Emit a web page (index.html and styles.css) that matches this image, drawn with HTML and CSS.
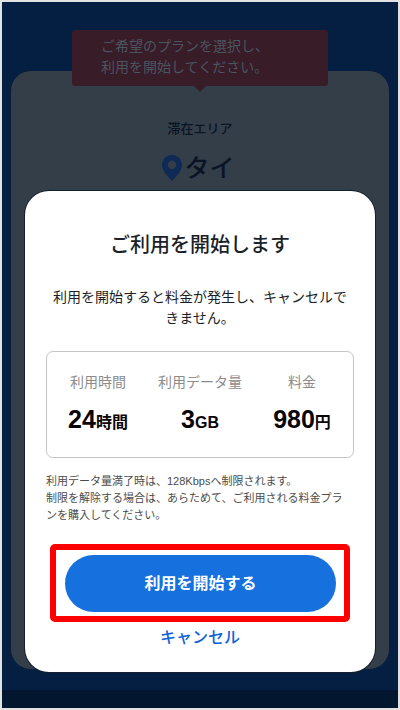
FILE: index.html
```html
<!DOCTYPE html>
<html lang="ja">
<head>
<meta charset="UTF-8" />
<meta name="viewport" content="width=device-width, initial-scale=1" />
<title>ご利用を開始します</title>
<link rel="stylesheet" href="styles.css">
</head>
<body>
<div class="screen">
  <main class="plan-page">
    <div class="plan-card">
      <p class="guide">ご希望のプランを選択し、<br>利用を開始してください。</p>
      <p class="area-label">滞在エリア</p>
      <p class="area-name">
        <svg class="pin" viewBox="0 0 20 26" aria-hidden="true">
          <path fill-rule="evenodd" d="M10 0C4.400 0 0 4.300 0 9.800C0 16 5.500 21 10 26C14.500 21 20 16 20 9.800C20 4.300 15.600 0 10 0ZM10 5.500A4.200 4.200 0 1 1 10 13.900A4.200 4.200 0 1 1 10 5.500Z" />
        </svg>
        <span>タイ</span>
      </p>
    </div>
  </main>
  <div class="bottom-bar"></div>

  <div class="overlay">
    <div class="modal" role="dialog" aria-modal="true" aria-labelledby="modalTitle">
      <h1 class="modal-title" id="modalTitle">ご利用を開始します</h1>
      <p class="modal-text">利用を開始すると料金が発生し、キャンセルできません。</p>

      <dl class="summary">
        <div class="summary-item">
          <dt>利用時間</dt>
          <dd>24<span class="unit">時間</span></dd>
        </div>
        <div class="summary-item">
          <dt>利用データ量</dt>
          <dd>3<span class="unit">GB</span></dd>
        </div>
        <div class="summary-item">
          <dt>料金</dt>
          <dd>980<span class="unit">円</span></dd>
        </div>
      </dl>

      <p class="note">利用データ量満了時は、128Kbpsへ制限されます。<br>制限を解除する場合は、あらためて、ご利用される料金プランを購入してください。</p>

      <div class="highlight">
        <button type="button" class="start-btn">利用を開始する</button>
      </div>
      <button type="button" class="cancel-btn">キャンセル</button>
    </div>
  </div>
</div>
</body>
</html>
```
FILE: styles.css
```css
* {
  box-sizing: border-box;
}
body, p, h1, dl, dd {
  margin: 0;
}
body {
  font-family: "Liberation Sans", "Noto Sans CJK JP", sans-serif;
  color: #1b1f28;
  font-size: 14px;
}
button {
  font-family: inherit;
  cursor: pointer;
}
.screen {
  position: relative;
  display: flex;
  flex-direction: column;
  min-height: 100vh;
  border: 2px solid #e2e2e2;
  background: #041f41;
}

/* page behind the dialog */
.plan-page {
  flex: 1;
  display: flex;
  padding: 69px 9px 21px;
}
.plan-card {
  flex: 1;
  display: flex;
  flex-direction: column;
  align-items: center;
  border-radius: 20px;
  background: #343e48;
}
.guide {
  position: relative;
  width: 256px;
  margin-top: -41px;
  padding: 6px 29px 8px;
  border-radius: 3px;
  background: #381c28;
  color: #4a5560;
  line-height: 21px;
}
.guide::after {
  content: "";
  position: absolute;
  top: 100%;
  left: 50%;
  margin-left: -6px;
  border: 6px solid transparent;
  border-top-color: #381c28;
  border-bottom: 0;
}
.area-label {
  margin-top: 32px;
  color: #0a1424;
  font-size: 13px;
  font-weight: 500;
  line-height: 21px;
}
.area-name {
  display: flex;
  align-items: center;
  gap: 2px;
  margin-top: 11px;
  padding-right: 3px;
  color: #0a1424;
  font-size: 25px;
  font-weight: 500;
  line-height: 36px;
}
.pin {
  width: 20px;
  height: 26px;
  fill: #0e2a55;
}
.bottom-bar {
  height: 18px;
  background: #021630;
}

/* dialog */
.overlay {
  position: absolute;
  inset: 0;
  display: flex;
  align-items: flex-end;
  padding: 0 23px 36px;
}
.modal {
  flex: 1;
  padding: 36px 21px 22px;
  border-radius: 24px;
  background: #fff;
  box-shadow: 0 0 0 1px #14202e;
}
.modal-title {
  font-size: 20px;
  font-weight: 500;
  line-height: 36px;
  text-align: center;
}
.modal-text {
  margin-top: 24px;
  padding: 0 4px;
  line-height: 21px;
  text-align: center;
}
.summary {
  display: grid;
  grid-template-columns: repeat(3, 1fr);
  margin-top: 22px;
  padding: 20px 0 18px;
  border: 1px solid #c4c4c4;
  border-radius: 7px;
  text-align: center;
}
.summary dt {
  color: #8c8c8c;
  line-height: 21px;
}
.summary dd {
  margin-top: 10px;
  color: #0a0608;
  font-size: 25px;
  font-weight: bold;
  line-height: 32px;
}
.summary .unit {
  font-size: 16px;
}
.note {
  margin-top: 15px;
  padding-right: 8px;
  color: #4c4c4c;
  font-size: 11px;
  line-height: 17px;
}
.highlight {
  margin: 20px 4px 0;
  padding: 5px 8px 4px 9px;
  border: 6px solid #fe0000;
  border-radius: 5px;
}
.start-btn {
  display: block;
  width: 100%;
  height: 57px;
  padding: 0 0 4px;
  border: 0;
  border-radius: 29px;
  background: #1671df;
  color: #fff;
  font-size: 16px;
  font-weight: bold;
}
.cancel-btn {
  display: block;
  margin: 4px auto 0;
  padding: 0 12px;
  border: 0;
  background: none;
  color: #0e63d8;
  font-size: 16px;
  font-weight: 500;
  line-height: 24px;
}
```
